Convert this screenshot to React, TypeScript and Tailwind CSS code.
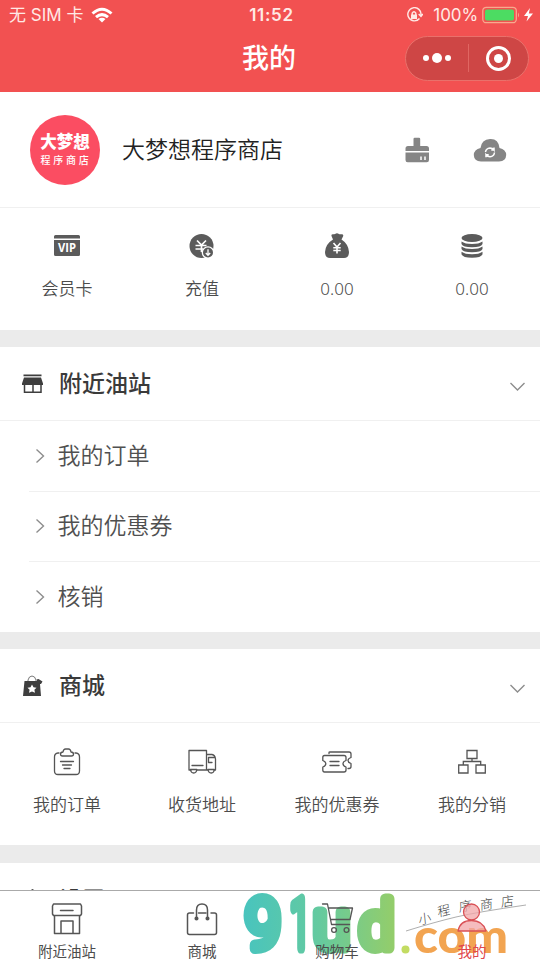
import React from "react";

const cjk = "font-['Noto_Sans','Noto_Sans_CJK_SC',sans-serif]";
const sys = "font-['Inter','Noto_Sans_CJK_SC',sans-serif]";

function Line({ children, w = 32, h = 32, sw = 1.3, color = "#555" }: { children: React.ReactNode; w?: number; h?: number; sw?: number; color?: string }) {
  return (
    <svg width={w} height={h} viewBox={`0 0 ${w} ${h}`} fill="none" stroke={color} strokeWidth={sw} strokeLinecap="round" strokeLinejoin="round" className="block shrink-0">
      {children}
    </svg>
  );
}

const VipIcon = () => (
  <svg width="32" height="32" viewBox="0 0 32 32" className="block">
    <path d="M3 8V6.500Q3 5 4.500 5H27.500Q29 5 29 6.500V8.500H3ZM3 10H29V24.500Q29 26 27.500 26H4.500Q3 26 3 24.500Z" fill="#5b5b5b" />
    <text x="16" y="22" textAnchor="middle" fontSize="11.500" fontWeight="700" textLength="18" lengthAdjust="spacingAndGlyphs" fontFamily="Open Sans, sans-serif" fill="#fff">VIP</text>
  </svg>
);

const RechargeIcon = () => (
  <svg width="32" height="32" viewBox="0 0 32 32" className="block">
    <circle cx="15.500" cy="16" r="12" fill="#5b5b5b" />
    <path d="M11 10.500L15.500 15L20 10.500M9.500 15.500H20.500M9.500 19H17M15.500 15V22" stroke="#fff" strokeWidth="1.700" fill="none" />
    <circle cx="22" cy="22.500" r="6.300" fill="#fff" />
    <circle cx="22" cy="22.500" r="5" fill="#5b5b5b" />
    <path d="M22 19.300V25M19.800 23L22 25.300L24.200 23" stroke="#fff" strokeWidth="1.300" fill="none" />
  </svg>
);

const BagIcon = () => (
  <svg width="32" height="32" viewBox="0 0 32 32" className="block">
    <path d="M10.500 6Q10 4 12.500 4.300Q14 4.500 15 3.600Q16.200 2.800 17.500 3.800Q18.500 4.500 20.500 4.300Q23 4.200 22 6.500L20.500 9.500Q27.500 14 28 22Q28 28 23 28H9Q4 28 4 22Q4.500 14 12 9.500Z" fill="#5b5b5b" />
    <path d="M12.500 13L16 17L19.500 13M12.300 17.700H19.700M12.300 20.500H19.700M16 17V23.500" stroke="#fff" strokeWidth="1.600" fill="none" />
  </svg>
);

const CoinsIcon = () => (
  <svg width="32" height="32" viewBox="0 0 32 32" className="block" fill="#5b5b5b">
    <ellipse cx="16" cy="8" rx="10.500" ry="4" />
    <path d="M5.500 11.500Q9 14 16 14T26.500 11.500V14Q25 17.300 16 17.300T5.500 14Z" />
    <path d="M5.500 16.500Q9 19 16 19T26.500 16.500V19Q25 22.300 16 22.300T5.500 19Z" />
    <path d="M5.500 21.700Q9 24.200 16 24.200T26.500 21.700V24.200Q25 27.800 16 27.800T5.500 24.200Z" />
  </svg>
);

const OrdersIcon = () => (
  <Line>
    <path d="M8 7H7Q3.500 7.500 3.500 11V25Q3.500 28.500 7 28.500H25Q28.500 28.500 28.500 25V11Q28.500 7.500 25 7H24" />
    <path d="M11.500 10Q9.500 10 9.500 8.200Q9.500 6 12 6Q12.500 3 14.500 3H17.500Q19.500 3 20 6Q22.500 6 22.500 8.200Q22.500 10 20.500 10Z" />
    <path d="M9.500 15.500H22.500M11.500 19H20.500M13 22.500H19" />
  </Line>
);

const TruckIcon = () => (
  <Line>
    <path d="M5 24H3V4.500H20.500V24M10.500 24H22M20.500 8.500H26Q29 9 29.500 13V24H28M28.500 11.500Q28 11.500 22.500 11.500V16.500H26M6 19.500H17" />
    <path d="M4.500 23.500H10.800Q10.500 27 7.700 27T4.500 23.500ZM22 23.500H28.300Q28 27 25.200 27T22 23.500Z" />
  </Line>
);

const CouponIcon = () => (
  <Line>
    <path d="M3.500 9.500H23Q25 9.500 25 11.500V14.500Q22 15.500 22 17.800T25 21V24Q25 26 23 26H3.500Q1.800 26 1.800 24V21Q4.800 20 4.800 17.800T1.800 14.500V11.500Q1.800 9.500 3.500 9.500Z" />
    <path d="M8 7.500V6.500Q8 6 9 6H28Q30 6 30 8V11.500Q27 12.500 27 14.500T30 17.500V20.500Q30 22.500 28 22.500H27M9 15.500H18M9 19.500H18" />
  </Line>
);

const TeamIcon = () => (
  <Line>
    <path d="M11 4.500H21V12.500H11ZM2.700 19H12V27H2.700ZM20 19H29.300V27H20ZM16 12.500V15.500M7.300 19V15.500H24.700V19" strokeLinejoin="miter" />
  </Line>
);

const StoreTab = () => (
  <Line w={34} h={36} sw={1.500}>
    <path d="M3.500 4H30.500L31.500 6V14L30.500 15.500H3.500L2.500 14V6ZM4.500 15.500V33.500H29.500V15.500M11 33.500V21H23V33.500M10.500 10.500H23" />
  </Line>
);

const BagTab = () => (
  <Line w={34} h={36} sw={1.500}>
    <path d="M8.500 13H4.500Q2.500 13 2.500 15V32.500Q2.500 34.500 4.500 34.500H29.500Q31.500 34.500 31.500 32.500V15Q31.500 13 29.500 13H26M13.500 13H21" />
    <path d="M11.500 18V10Q11.500 4 17 4T22.500 10V18" />
    <circle cx="11.500" cy="18.500" r="1.300" fill="#555" />
    <circle cx="22.500" cy="18.500" r="1.300" fill="#555" />
  </Line>
);

const CartTab = () => (
  <Line w={34} h={36} sw={1.300}>
    <path d="M2.500 4H7.500L11.500 24.500H29.500M8.500 8H32.500L30 19.500H10.700" />
    <circle cx="14" cy="30" r="2.400" />
    <circle cx="26.500" cy="30" r="2.400" />
  </Line>
);

const UserTab = () => (
  <Line w={34} h={36} sw={1.300} color="#d95055">
    <circle cx="16.500" cy="12" r="8" fill="#f2a5a8" fillOpacity=".75" />
    <path d="M3 31Q5 20.500 16.500 20.500T31 31Z" fill="#f2a5a8" fillOpacity=".75" />
  </Line>
);

function Cell({ icon, label }: { icon: React.ReactNode; label: string }) {
  return (
    <div className="flex w-[135px] flex-col items-center">
      {icon}
      <span className="mt-[15px] ml-px text-[17px] leading-6 font-[350] whitespace-nowrap text-[#4c4c4c]">{label}</span>
    </div>
  );
}

function SectionHead({ icon, title }: { icon: React.ReactNode; title: string }) {
  return (
    <div className="flex h-[74px] items-center border-b border-[#f0f0f0] pl-5">
      {icon}
      <h2 className="-mt-px ml-[13px] text-[23px] leading-8 font-medium text-[#3a3a3a]">{title}</h2>
      <svg width="18" height="12" viewBox="0 0 18 12" className="mt-[6px] mr-[14px] ml-auto" fill="none" stroke="#8d8d8d" strokeWidth="1.400"><path d="M2.500 2L9.500 9L16.500 2" /></svg>
    </div>
  );
}

function Row({ label, last }: { label: string; last?: boolean }) {
  return (
    <div className={`ml-[29px] flex h-[70.6px] items-center ${last ? "" : "border-b border-[#f0f0f0]"}`}>
      <svg width="12" height="18" viewBox="0 0 12 18" className="ml-[6px]" fill="none" stroke="#8d8d8d" strokeWidth="1.400"><path d="M1.500 2.500L8.500 9L1.500 15.500" /></svg>
      <span className="-mt-[2px] ml-[10.5px] text-[23px] leading-8 font-[350] text-[#505050]">{label}</span>
    </div>
  );
}

function Watermark() {
  return (
    <svg width="300" height="69" viewBox="240 891 300 69" className="absolute top-0 left-[240px] overflow-visible">
      <defs>
        <linearGradient id="wm" gradientUnits="userSpaceOnUse" x1="243" y1="0" x2="393" y2="0">
          <stop offset="0" stopColor="#48c4be" />
          <stop offset=".5" stopColor="#64caa0" />
          <stop offset="1" stopColor="#93cd6b" />
        </linearGradient>
      </defs>
      <g fill="url(#wm)" stroke="url(#wm)" strokeWidth="11" strokeLinejoin="round" fontFamily="Roboto, sans-serif" fontWeight="300">
        <text x="245.500" y="947.500" fontSize="68" textLength="35" lengthAdjust="spacingAndGlyphs">9</text>
        <text x="290" y="947.500" fontSize="68" textLength="20" lengthAdjust="spacingAndGlyphs">1</text>
        <text x="313" y="947.500" fontSize="69" textLength="37" lengthAdjust="spacingAndGlyphs">u</text>
        <text x="359" y="947.500" fontSize="65" textLength="35" lengthAdjust="spacingAndGlyphs">d</text>
      </g>
      <circle cx="405.500" cy="949.500" r="4" fill="#c3dc62" />
      <text x="414" y="952.500" fontFamily="Lato, sans-serif" fontWeight="900" fontSize="48" fill="#f2a451" textLength="94" lengthAdjust="spacingAndGlyphs">com</text>
      <path d="M406 931Q435 922 456 917T526 905" stroke="#999" strokeWidth=".8" fill="none" />
      <g fontFamily="Noto Sans CJK SC, sans-serif" fontWeight="300" fontSize="13" fill="#444">
        <text transform="translate(419 925) rotate(-14) skewX(-8)">小</text>
        <text transform="translate(438 917) rotate(-14) skewX(-8)">程</text>
        <text transform="translate(459 912) rotate(-10) skewX(-8)">序</text>
        <text transform="translate(480 910) rotate(-8) skewX(-8)">商</text>
        <text transform="translate(501 907) rotate(-8) skewX(-8)">店</text>
      </g>
    </svg>
  );
}

export default function App() {
  const tabs = [
    { label: "附近油站", icon: <StoreTab />, c: "text-[#4c4c4c]" },
    { label: "商城", icon: <BagTab />, c: "text-[#4c4c4c]" },
    { label: "购物车", icon: <CartTab />, c: "text-[#4c4c4c]" },
    { label: "我的", icon: <UserTab />, c: "text-[#e0484d]" },
  ];
  return (
    <div className={`flex h-[960px] w-[540px] flex-col overflow-hidden bg-white ${cjk}`}>
      <header className="h-[92px] shrink-0 bg-[#f25151] text-[#ffe9e5]">
        <div className={`grid h-[30px] grid-cols-3 items-center text-[17px] leading-6 ${sys}`}>
          <div className="flex items-center pl-[9px]">
            <span className="text-[17px] whitespace-nowrap">无 SIM 卡</span>
            <svg width="22" height="17" viewBox="0 0 22 17" className="ml-[8px]" fill="none" stroke="#fff" strokeWidth="3">
              <path d="M1.500 6.500Q11 -2 20.500 6.500M5 10.200Q11 5 17 10.200" />
              <path d="M7.500 12Q11 9.500 14.500 12L11 15.500Z" fill="#fff" stroke="none" />
            </svg>
          </div>
          <div className="pl-[3px] text-center font-semibold tracking-[.7px]">11:52</div>
          <div className="flex items-center justify-end pr-[6px]">
            <svg width="17" height="17" viewBox="0 0 17 17" fill="none" stroke="#ffe9e5" strokeWidth="1.400">
              <path d="M13.500 11.500A6.600 6.600 0 1 1 15 8M12.700 7L15 9.500L17 7" />
              <path d="M5 7.500H11V12H5Z" fill="#ffe9e5" stroke="none" />
              <path d="M6.200 8V6.200Q8 3.300 9.800 6.200V8" />
            </svg>
            <span className="ml-[10px] tracking-[-.1px]">100%</span>
            <svg width="52" height="18" viewBox="0 0 52 18" className="ml-1">
              <rect x=".8" y="1.300" width="33.500" height="15.400" rx="3.500" fill="none" stroke="#f8a98e" strokeWidth="1.300" />
              <rect x="3" y="3.500" width="29" height="11" rx="2" fill="#4cdc62" />
              <path d="M36 6.500Q38 9 36 11.500Z" fill="#f8a98e" />
              <path d="M48 2L42 10H46L44.500 15.500L51 7.500H46.800Z" fill="#fff" />
            </svg>
          </div>
        </div>
        <div className="grid h-[56px] grid-cols-3 items-center">
          <span />
          <h1 className="pr-[2px] text-center text-[27px] leading-10 font-medium text-white">我的</h1>
          <div className="mr-[11px] flex h-[45px] w-[124px] items-center justify-self-end rounded-full border border-[#e9716b] bg-[#ce4645]">
            <div className="flex w-[62px] items-center justify-center gap-[3px]">
              <i className="size-[6px] rounded-full bg-white" />
              <i className="size-[10px] rounded-full bg-white" />
              <i className="size-[6px] rounded-full bg-white" />
            </div>
            <div className="h-7 w-px bg-[#e06662]" />
            <div className="flex flex-1 items-center justify-center">
              <div className="flex size-[25px] items-center justify-center rounded-full border-[3px] border-white">
                <i className="size-[9px] rounded-full bg-white" />
              </div>
            </div>
          </div>
        </div>
      </header>

      <main className="min-h-0 flex-1 overflow-hidden">
        <section className="flex h-[116px] items-center border-b border-[#f0f0f0] pl-[30px]">
          <div className="flex size-[70px] flex-col items-center rounded-full bg-[#fb4d62] pt-[17px] text-white">
            <span className="text-[16.5px] leading-[20px] font-black">大梦想</span>
            <span className="mt-[1px] ml-[2px] text-[10px] leading-[14px] font-medium tracking-[2.8px]">程序商店</span>
          </div>
          <span className="-mt-[2px] ml-[22px] text-[23px] leading-8 font-[350] text-[#222]">大梦想程序商店</span>
          <svg width="26" height="26" viewBox="0 0 26 26" className="ml-auto" fill="#858585">
            <path d="M9.500 9V2Q9.500 .8 10.700 .8H15Q16.200 .8 16.200 2V9H22.500Q25 9 25 11.500V14H1.500V11.500Q1.500 9 4 9ZM1.500 15.500H25V23Q25 25.200 22.800 25.200H3.700Q1.500 25.200 1.500 23Z" />
            <path d="M17 19.500V23M21 19.500V23" stroke="#fff" strokeWidth="1.500" />
          </svg>
          <svg width="34" height="26" viewBox="0 0 34 26" className="mr-[33px] ml-[43px]">
            <path d="M8 24.500Q1 24 .8 18Q1 12.500 7.500 11Q8.500 2.500 17 2T26.500 11Q33 12.500 33.200 18Q33 24 26 24.500Z" fill="#858585" />
            <path d="M12.500 15Q13 11.500 17 11Q19.500 11 21 13V10.500M21.500 15.500Q21 19.500 17 19.800Q14.500 19.800 13 17.800V20.300M21 13H18.300M13 17.800H15.700" fill="none" stroke="#fff" strokeWidth="1.500" />
          </svg>
        </section>

        <section className="-ml-px flex h-[122px] pt-[22px]">
          <Cell icon={<VipIcon />} label="会员卡" />
          <Cell icon={<RechargeIcon />} label="充值" />
          <Cell icon={<BagIcon />} label="0.00" />
          <Cell icon={<CoinsIcon />} label="0.00" />
        </section>
        <div className="h-[17px] bg-[#ebebeb]" />

        <section className="h-[285px]">
          <SectionHead
            title="附近油站"
            icon={
              <svg width="26" height="26" viewBox="0 0 26 26" className="shrink-0">
                <path d="M3.500 3.500H21.500V5.200H3.500ZM4 6.500H21L23 12.500V14H2V12.500Z" fill="#3e3e3e" />
                <path d="M4.500 12V21.300H21V12M13 12V21" fill="none" stroke="#3e3e3e" strokeWidth="1.500" />
              </svg>
            }
          />
          <Row label="我的订单" />
          <Row label="我的优惠券" />
          <Row label="核销" last />
        </section>
        <div className="h-[17px] bg-[#ebebeb]" />

        <section className="h-[196px]">
          <SectionHead
            title="商城"
            icon={
              <svg width="26" height="26" viewBox="0 0 26 26" className="shrink-0">
                <path d="M8 9V7Q9 3 12 3T16 7V9" fill="none" stroke="#777" strokeWidth="1" />
                <path d="M4.500 8H17L16.500 6.500L18.500 6L22.500 8.500L21 11H20L21 23H3Z" fill="#3e3e3e" />
                <path d="M12 11.500L13.500 14.300L16.500 14.700L14.400 16.800L15 19.800L12 18.400L9 19.800L9.600 16.800L7.500 14.700L10.500 14.300Z" fill="#fff" />
              </svg>
            }
          />
          <div className="-ml-px flex pt-[23px]">
            <Cell icon={<OrdersIcon />} label="我的订单" />
            <Cell icon={<TruckIcon />} label="收货地址" />
            <Cell icon={<CouponIcon />} label="我的优惠券" />
            <Cell icon={<TeamIcon />} label="我的分销" />
          </div>
        </section>
        <div className="h-[18px] bg-[#ebebeb]" />
        <SectionHead
          title="设置"
          icon={
            <svg width="26" height="26" viewBox="0 0 26 26" className="shrink-0"><path d="M12.500 2L22 8V19L12.500 24L3 19V8Z" fill="#3e3e3e" /></svg>
          }
        />
      </main>

      <nav className="relative h-[70px] shrink-0 border-t border-[#aaa] bg-white">
        <Watermark />
        <div className="relative -ml-px flex pt-[9px]">
          {tabs.map((t) => (
            <div key={t.label} className="flex w-[135px] flex-col items-center">
              {t.icon}
              <span className={`mt-[5px] ml-px text-[14.5px] leading-5 ${t.c}`}>{t.label}</span>
            </div>
          ))}
        </div>
      </nav>
    </div>
  );
}
